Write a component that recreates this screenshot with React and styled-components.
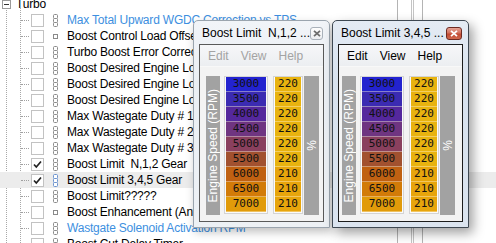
import React from "react";
import styled, { createGlobalStyle, css } from "styled-components";

const Global = createGlobalStyle`
  html, body { margin: 0; padding: 0; background: #fff; overflow: hidden; }
  body { font-family: "Liberation Sans", Arial, sans-serif; }
`;

const Page = styled.div`
  position: relative;
  width: 496px;
  height: 243px;
  overflow: hidden;
  background: #fff;
`;

/* ---------- tree ---------- */
const Tree = styled.div`
  margin-top: -4px;
  background-image:
    repeating-linear-gradient(to bottom, #a8a8a8 0 1px, transparent 1px 2px),
    repeating-linear-gradient(to bottom, #a8a8a8 0 1px, transparent 1px 2px);
  background-size: 1px 100%, 1px 100%;
  background-position: 6px 10px, 20px 12px;
  background-repeat: no-repeat;
  height: 260px;
`;

const Row = styled.div`
  display: flex;
  align-items: center;
  height: 16px;
  font-size: 12px;
  letter-spacing: -0.2px;
  white-space: pre;
  color: ${(p) => (p.$blue ? "#3d8fe0" : "#000")};
  background: ${(p) => (p.$selected ? "#ececec" : "transparent")};
`;

const Expander = styled.span`
  box-sizing: border-box;
  width: 9px;
  height: 9px;
  margin-left: 2px;
  margin-right: 5px;
  border: 1px solid #9a9a9a;
  background: #fff;
  position: relative;
  &::after {
    content: "";
    position: absolute;
    left: 1px;
    right: 1px;
    top: 3px;
    height: 1px;
    background: #333;
  }
`;

const Connector = styled.span`
  width: 8px;
  margin-left: 21px;
  height: 0;
  border-top: 1px dotted #a0a0a0;
`;

const Check = styled.span`
  box-sizing: border-box;
  width: 13px;
  height: 13px;
  margin-left: 2px;
  border: 1px solid #c2c2c2;
  background: #fff;
  display: flex;
  align-items: center;
  justify-content: center;
`;

const IconBox = styled.span`
  display: flex;
  width: 6px;
  margin-left: 8px;
  margin-right: 9px;
  justify-content: center;
`;

const Label = styled.span`
  line-height: 16px;
`;

const TableIcon = ({ kind, active }) => {
  const c = active ? "#6b93cf" : "#8a8a8a";
  if (kind === "1d")
    return (
      <svg width="5" height="13" viewBox="0 0 5 13">
        <rect x="0.5" y="4.5" width="4" height="4" fill="#fff" stroke={c} />
      </svg>
    );
  return (
    <svg width="5" height="13" viewBox="0 0 5 13">
      <rect x="0.5" y="0.5" width="4" height="4" rx="1" fill="#fff" stroke={c} />
      <rect x="0.5" y="4.5" width="4" height="4" rx="1" fill="#fff" stroke={c} />
      <rect x="0.5" y="8.5" width="4" height="4" rx="1" fill="#fff" stroke={c} />
    </svg>
  );
};

const CheckMark = () => (
  <svg width="11" height="11" viewBox="0 0 11 11">
    <path d="M2 5.5 L4.3 8 L9 2.5" fill="none" stroke="#222" strokeWidth="1.7" />
  </svg>
);

const items = [
  { t: "Max Total Upward WGDC Correction vs TPS", blue: true },
  { t: "Boost Control Load Offset Non-Zero", k: "1d" },
  { t: "Turbo Boost Error Correction" },
  { t: "Boost Desired Engine Load Compensation" },
  { t: "Boost Desired Engine Load Offset" },
  { t: "Boost Desired Engine Load Limit" },
  { t: "Max Wastegate Duty # 1" },
  { t: "Max Wastegate Duty # 2" },
  { t: "Max Wastegate Duty # 3" },
  { t: "Boost Limit  N,1,2 Gear", checked: true },
  { t: "Boost Limit 3,4,5 Gear", checked: true, selected: true },
  { t: "Boost Limit?????" },
  { t: "Boost Enhancement (Anti-Lag)", k: "1d" },
  { t: "Wastgate Solenoid Activation RPM", blue: true },
  { t: "Boost Cut Delay Timer" },
];

/* ---------- background window edge ---------- */
const BackWindow = styled.div`
  position: absolute;
  left: 397px;
  top: 0;
  width: 24px;
  height: 243px;
  border-left: 1px solid #b4b4b4;
  border-right: 1px solid #b4b4b4;
  background: #fff;
  &::after {
    content: "";
    position: absolute;
    left: 13px;
    top: 0;
    bottom: 0;
    width: 1px;
    border-left: 1px solid #c4c4c4;
    border-right: 1px solid #c4c4c4;
  }
`;

/* ---------- windows ---------- */
const Win = styled.div`
  position: absolute;
  top: 20px;
  left: ${(p) => p.$left}px;
  width: 137px;
  height: 208px;
  box-sizing: border-box;
  display: flex;
  flex-direction: column;
  padding: 0 5px 5px 5px;
  border-radius: 5px 5px 0 0;
  ${(p) =>
    p.$active
      ? css`
          border: 1px solid #3e4852;
          background: linear-gradient(to bottom, #e4ebf4, #d8e2ee 30%, #dbe4ef);
          box-shadow: 4px 5px 12px rgba(0, 0, 0, 0.38);
        `
      : css`
          border: 1px solid #9aa4ae;
          background: linear-gradient(to bottom, #f1f4f8, #ebeff4 30%, #edf1f5);
          box-shadow: 2px 4px 10px rgba(0, 0, 0, 0.25);
        `}
`;

const TitleBar = styled.div`
  height: 23px;
  display: flex;
  align-items: center;
  justify-content: space-between;
  padding-left: 3px;
`;

const Title = styled.span`
  font-size: 12px;
  white-space: pre;
  color: #000;
  margin-top: 1px;
`;

const CloseBtn = styled.span`
  box-sizing: border-box;
  width: 16px;
  height: 13px;
  margin-right: 1px;
  margin-top: 1px;
  display: flex;
  align-items: center;
  justify-content: center;
  border-radius: 3px;
  ${(p) =>
    p.$active
      ? css`
          border: 1px solid #6e2a22;
          background: linear-gradient(to bottom, #e8a496, #d2705c 45%, #c24a32 55%, #d0684e);
        `
      : css`
          border: 1px solid #a9b1ba;
          background: linear-gradient(to bottom, #fdfdfd, #eceef1);
        `}
`;

const Client = styled.div`
  flex: 1;
  display: flex;
  flex-direction: column;
  border: 1px solid ${(p) => (p.$active ? "#1c1c1c" : "#5a5a5a")};
  background: #f3f3f3;
`;

const MenuBar = styled.div`
  height: 21px;
  display: flex;
  align-items: center;
  padding-left: 2px;
  background: linear-gradient(to bottom, #f6f7f9, #eceef1);
  border-bottom: 1px solid #f8f8f8;
`;

const MenuItem = styled.span`
  font-size: 12px;
  padding: 0 6px;
  color: ${(p) => (p.$active ? "#000" : "#a3a3a3")};
`;

const GridArea = styled.div`
  display: flex;
  align-items: flex-start;
  padding-top: 9px;
  padding-left: ${(p) => p.$pad}px;
`;

const GrayBar = styled.div`
  width: ${(p) => p.$w}px;
  height: 139px;
  background: #a2a2a2;
  display: flex;
  align-items: center;
  justify-content: center;
  margin-left: ${(p) => p.$ml || 0}px;
`;

const VertText = styled.span`
  writing-mode: vertical-rl;
  transform: rotate(180deg);
  color: #fff;
  font-size: 12px;
  white-space: nowrap;
  line-height: 14px;
`;

const CellCol = styled.div`
  margin-left: ${(p) => p.$ml}px;
  border: 1px solid #d4d4d4;
  padding: 0 1px 1px 1px;
  background: #fafafa;
  display: flex;
  flex-direction: column;
`;

const Cell = styled.div`
  box-sizing: border-box;
  width: ${(p) => p.$w}px;
  height: 15px;
  background: ${(p) => p.$bg};
  border-bottom: 1px solid rgba(255, 240, 200, 0.45);
  font-family: "DejaVu Sans Mono", "Liberation Mono", monospace;
  font-size: 11px;
  line-height: 14px;
  text-align: center;
  color: #111;
`;

const axis = [
  ["3000", "#2323cf"],
  ["3500", "#3b2bb2"],
  ["4000", "#55289d"],
  ["4500", "#6f3581"],
  ["5000", "#8a405e"],
  ["5500", "#a2512f"],
  ["6000", "#c06112"],
  ["6500", "#d27b08"],
  ["7000", "#e19b0a"],
];
const vals = [
  ["220", "#e8b30f"],
  ["220", "#e8b30f"],
  ["220", "#e8b30f"],
  ["220", "#e8b30f"],
  ["220", "#e8b30f"],
  ["220", "#e8b30f"],
  ["210", "#e7a50c"],
  ["210", "#e7a50c"],
  ["210", "#e7a50c"],
];

const XGlyph = ({ active }) => (
  <svg width="8" height="7" viewBox="0 0 8 7">
    <path
      d="M1 0.8 L7 6.2 M7 0.8 L1 6.2"
      stroke={active ? "#fff" : "#6c6c6c"}
      strokeWidth="1.8"
    />
  </svg>
);

const TableWindow = ({ left, title, active, pad }) => (
  <Win $left={left} $active={active}>
    <TitleBar>
      <Title>{title}</Title>
      <CloseBtn $active={active}>
        <XGlyph active={active} />
      </CloseBtn>
    </TitleBar>
    <Client $active={active}>
      <MenuBar>
        <MenuItem $active={active}>Edit</MenuItem>
        <MenuItem $active={active}>View</MenuItem>
        <MenuItem $active={active}>Help</MenuItem>
      </MenuBar>
      <GridArea $pad={pad}>
        <GrayBar $w={14}>
          <VertText>Engine Speed (RPM)</VertText>
        </GrayBar>
        <CellCol $ml={4}>
          {axis.map(([v, c]) => (
            <Cell key={v} $w={40} $bg={c}>
              {v}
            </Cell>
          ))}
        </CellCol>
        <CellCol $ml={5}>
          {vals.map(([v, c], i) => (
            <Cell key={i} $w={26} $bg={c}>
              {v}
            </Cell>
          ))}
        </CellCol>
        <GrayBar $w={15} $ml={1}>
          <VertText>%</VertText>
        </GrayBar>
      </GridArea>
    </Client>
  </Win>
);

export default function App() {
  return (
    <Page>
      <Global />
      <Tree>
        <Row>
          <Expander />
          <Label>Turbo</Label>
        </Row>
        {items.map((it, i) => (
          <Row key={i} $blue={it.blue} $selected={it.selected}>
            <Connector />
            <Check>{it.checked && <CheckMark />}</Check>
            <IconBox>
              <TableIcon kind={it.k} active={it.selected} />
            </IconBox>
            <Label>{it.t}</Label>
          </Row>
        ))}
      </Tree>
      <BackWindow />
      <TableWindow left={193} title={"Boost Limit  N,1,2 ..."} pad={6} />
      <TableWindow left={332} title={"Boost Limit 3,4,5 ..."} active pad={3} />
    </Page>
  );
}
